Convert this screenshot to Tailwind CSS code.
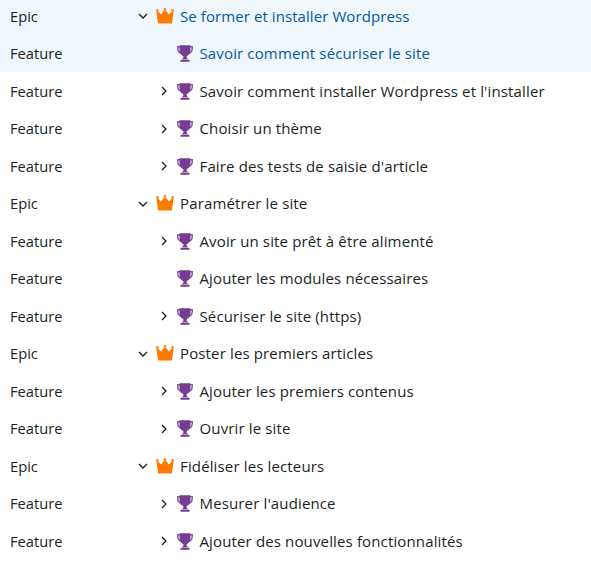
<!DOCTYPE html>
<html><head><meta charset="utf-8"><script src="https://cdn.jsdelivr.net/npm/@tailwindcss/browser@4"></script></head>
<body class="bg-white overflow-hidden">
<svg width="0" height="0" class="absolute"><defs>
<symbol id="crown" viewBox="0 0 18 16"><path fill="#ff7b00" d="M1.300 2.500 L5 6.500 L9 1.500 L13 6.500 L16.700 2.500 L17.600 3 L16 15.500 L2 15.500 L0.400 3 Z"/><circle cx="1.300" cy="2.300" r="1.300" fill="#ff8a1f"/><circle cx="9" cy="1.300" r="1.300" fill="#ff8a1f"/><circle cx="16.700" cy="2.300" r="1.300" fill="#ff8a1f"/></symbol>
<symbol id="trophy" viewBox="0 0 16 17"><path fill="none" stroke="#84509f" stroke-width="1.400" d="M3.500 1.700H.8v1.800C.8 6 2.500 8 4.800 8.200M12.500 1.700h2.700v1.800C15.200 6 13.500 8 11.200 8.200"/><path fill="#773b93" d="M2.500 .2h11v5c0 3.200-2.300 5.300-3.800 5.800V13c0 .4 1.800.8 1.800 1.600H4.500c0-.8 1.800-1.200 1.800-1.600V11C4.800 10.500 2.500 8.400 2.500 5.200zM3.500 15h9v1.800h-9z"/></symbol>
<symbol id="right" viewBox="0 0 10 10"><path fill="none" stroke="#1f1f1f" stroke-width="1.300" d="M3 1l4 4-4 4"/></symbol>
<symbol id="down" viewBox="0 0 10 10"><path fill="none" stroke="#1f1f1f" stroke-width="1.300" d="M1 3l4 4 4-4"/></symbol>
</defs></svg>
<div class="-mt-[2.75px] font-['Open_Sans','Noto_Sans',sans-serif] text-[15px] tracking-[0.14px] text-[#201f1e]">
<div class="h-[37.5px] flex items-center pl-[10px] bg-[#eff6fc]"><span class="w-[128px] text-[14.7px] tracking-normal">Epic</span><span class="w-[10px] mr-[8px]"><svg class="w-[10px] h-[10px]"><use href="#down"/></svg></span><svg class="w-[18px] h-[16px] mr-[6px] -mt-[1px]"><use href="#crown"/></svg><span class="text-[#005a9e] tracking-[0.08px]">Se former et installer Wordpress</span></div>
<div class="h-[37.5px] flex items-center pl-[10px] bg-[#eff6fc]"><span class="w-[167px] text-[14.7px] tracking-normal">Feature</span><svg class="w-[16px] h-[17px] mr-[6.5px]"><use href="#trophy"/></svg><span class="text-[#005a9e]">Savoir comment sécuriser le site</span></div>
<div class="h-[37.5px] flex items-center pl-[10px]"><span class="w-[149px] text-[14.7px] tracking-normal">Feature</span><span class="w-[10px] mr-[8px]"><svg class="w-[10px] h-[10px]"><use href="#right"/></svg></span><svg class="w-[16px] h-[17px] mr-[6.5px]"><use href="#trophy"/></svg><span>Savoir comment installer Wordpress et l'installer</span></div>
<div class="h-[37.5px] flex items-center pl-[10px]"><span class="w-[149px] text-[14.7px] tracking-normal">Feature</span><span class="w-[10px] mr-[8px]"><svg class="w-[10px] h-[10px]"><use href="#right"/></svg></span><svg class="w-[16px] h-[17px] mr-[6.5px]"><use href="#trophy"/></svg><span>Choisir un thème</span></div>
<div class="h-[37.5px] flex items-center pl-[10px]"><span class="w-[149px] text-[14.7px] tracking-normal">Feature</span><span class="w-[10px] mr-[8px]"><svg class="w-[10px] h-[10px]"><use href="#right"/></svg></span><svg class="w-[16px] h-[17px] mr-[6.5px]"><use href="#trophy"/></svg><span>Faire des tests de saisie d'article</span></div>
<div class="h-[37.5px] flex items-center pl-[10px]"><span class="w-[128px] text-[14.7px] tracking-normal">Epic</span><span class="w-[10px] mr-[8px]"><svg class="w-[10px] h-[10px]"><use href="#down"/></svg></span><svg class="w-[18px] h-[16px] mr-[6px] -mt-[1px]"><use href="#crown"/></svg><span>Paramétrer le site</span></div>
<div class="h-[37.5px] flex items-center pl-[10px]"><span class="w-[149px] text-[14.7px] tracking-normal">Feature</span><span class="w-[10px] mr-[8px]"><svg class="w-[10px] h-[10px]"><use href="#right"/></svg></span><svg class="w-[16px] h-[17px] mr-[6.5px]"><use href="#trophy"/></svg><span>Avoir un site prêt à être alimenté</span></div>
<div class="h-[37.5px] flex items-center pl-[10px]"><span class="w-[167px] text-[14.7px] tracking-normal">Feature</span><svg class="w-[16px] h-[17px] mr-[6.5px]"><use href="#trophy"/></svg><span>Ajouter les modules nécessaires</span></div>
<div class="h-[37.5px] flex items-center pl-[10px]"><span class="w-[149px] text-[14.7px] tracking-normal">Feature</span><span class="w-[10px] mr-[8px]"><svg class="w-[10px] h-[10px]"><use href="#right"/></svg></span><svg class="w-[16px] h-[17px] mr-[6.5px]"><use href="#trophy"/></svg><span>Sécuriser le site (https)</span></div>
<div class="h-[37.5px] flex items-center pl-[10px]"><span class="w-[128px] text-[14.7px] tracking-normal">Epic</span><span class="w-[10px] mr-[8px]"><svg class="w-[10px] h-[10px]"><use href="#down"/></svg></span><svg class="w-[18px] h-[16px] mr-[6px] -mt-[1px]"><use href="#crown"/></svg><span>Poster les premiers articles</span></div>
<div class="h-[37.5px] flex items-center pl-[10px]"><span class="w-[149px] text-[14.7px] tracking-normal">Feature</span><span class="w-[10px] mr-[8px]"><svg class="w-[10px] h-[10px]"><use href="#right"/></svg></span><svg class="w-[16px] h-[17px] mr-[6.5px]"><use href="#trophy"/></svg><span>Ajouter les premiers contenus</span></div>
<div class="h-[37.5px] flex items-center pl-[10px]"><span class="w-[149px] text-[14.7px] tracking-normal">Feature</span><span class="w-[10px] mr-[8px]"><svg class="w-[10px] h-[10px]"><use href="#right"/></svg></span><svg class="w-[16px] h-[17px] mr-[6.5px]"><use href="#trophy"/></svg><span>Ouvrir le site</span></div>
<div class="h-[37.5px] flex items-center pl-[10px]"><span class="w-[128px] text-[14.7px] tracking-normal">Epic</span><span class="w-[10px] mr-[8px]"><svg class="w-[10px] h-[10px]"><use href="#down"/></svg></span><svg class="w-[18px] h-[16px] mr-[6px] -mt-[1px]"><use href="#crown"/></svg><span>Fidéliser les lecteurs</span></div>
<div class="h-[37.5px] flex items-center pl-[10px]"><span class="w-[149px] text-[14.7px] tracking-normal">Feature</span><span class="w-[10px] mr-[8px]"><svg class="w-[10px] h-[10px]"><use href="#right"/></svg></span><svg class="w-[16px] h-[17px] mr-[6.5px]"><use href="#trophy"/></svg><span>Mesurer l'audience</span></div>
<div class="h-[37.5px] flex items-center pl-[10px]"><span class="w-[149px] text-[14.7px] tracking-normal">Feature</span><span class="w-[10px] mr-[8px]"><svg class="w-[10px] h-[10px]"><use href="#right"/></svg></span><svg class="w-[16px] h-[17px] mr-[6.5px]"><use href="#trophy"/></svg><span>Ajouter des nouvelles fonctionnalités</span></div>
</div>
</body></html>
